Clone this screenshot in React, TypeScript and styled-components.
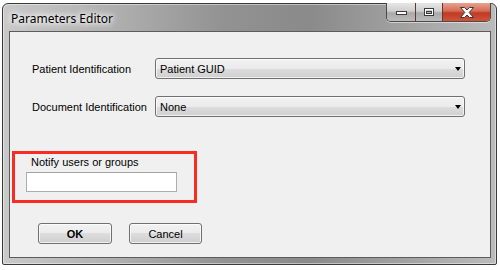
import styled, { createGlobalStyle } from 'styled-components';

const GlobalStyle = createGlobalStyle`
  html, body {
    margin: 0;
    padding: 0;
    background: #ffffff;
  }
  body {
    font-family: "Liberation Sans", Arial, sans-serif;
  }
`;

const Window = styled.div`
  box-sizing: border-box;
  margin: 3px 0 0 2px;
  width: 495px;
  height: 262px;
  border: 1px solid #3a3a3a;
  border-radius: 6px 6px 2px 2px;
  background: linear-gradient(
    90deg,
    #c9c9c9 0%,
    #b0b0b0 22%,
    #929292 45%,
    #8a8a8a 62%,
    #a0a0a0 80%,
    #bbbbbb 100%
  );
  box-shadow: inset 0 0 0 1px rgba(255, 255, 255, 0.45);
  display: flex;
  flex-direction: column;
  padding: 0 5px 6px 6px;
`;

const TitleBar = styled.div`
  height: 27px;
  display: flex;
  align-items: flex-start;
  justify-content: space-between;
`;

const Title = styled.div`
  font-family: "Noto Sans", "Open Sans", sans-serif;
  font-size: 12px;
  color: #000;
  margin: 6px 0 0 2px;
  text-shadow: 0 0 8px #ffffff, 0 0 8px #ffffff, 0 0 4px #ffffff;
`;

const Controls = styled.div`
  display: flex;
  margin-top: -1px;
  border: 1px solid #4a4a4a;
  border-top: none;
  border-radius: 0 0 5px 5px;
  overflow: hidden;
  box-shadow: 0 1px 0 rgba(255, 255, 255, 0.5);
`;

const CaptionButton = styled.div<{ $w: number; $close?: boolean }>`
  width: ${(p) => p.$w}px;
  height: 18px;
  display: flex;
  align-items: center;
  justify-content: center;
  background: ${(p) =>
    p.$close
      ? 'linear-gradient(180deg, #e7a391 0%, #d46a52 45%, #bf3a24 55%, #cf5338 100%)'
      : 'linear-gradient(180deg, #e6e6e6 0%, #cfcfcf 45%, #a9a9a9 55%, #bcbcbc 100%)'};
  & + & {
    border-left: 1px solid ${(p) => (p.$close ? '#5e3a32' : '#6a6a6a')};
  }
`;

const Client = styled.div`
  flex: 1;
  border: 1px solid #5c5c5c;
  background: #f0f0f0;
  padding: 26px 0 0 0;
  display: flex;
  flex-direction: column;
`;

const Form = styled.div`
  display: grid;
  grid-template-columns: 123px 310px;
  row-gap: 17px;
  margin-left: 22px;
  align-items: center;
`;

const Label = styled.span`
  font-size: 11px;
  color: #000;
`;

const Combo = styled.div`
  box-sizing: border-box;
  height: 21px;
  border: 1px solid #707070;
  border-radius: 3px;
  background: linear-gradient(180deg, #f2f2f2 0%, #ebebeb 50%, #dddddd 50%, #cfcfcf 100%);
  box-shadow: inset 0 0 0 1px rgba(255, 255, 255, 0.7);
  display: flex;
  align-items: center;
  justify-content: space-between;
  padding: 0 3px 0 4px;
  font-size: 11px;
  color: #000;
`;

const Arrow = styled.span`
  width: 0;
  height: 0;
  border-left: 3.5px solid transparent;
  border-right: 3.5px solid transparent;
  border-top: 4px solid #000;
`;

const NotifyBox = styled.div`
  box-sizing: border-box;
  margin: 34px 0 0 2px;
  width: 185px;
  height: 52px;
  border: 3px solid #fa2b25;
  display: flex;
  flex-direction: column;
`;

const NotifyLabel = styled.span`
  font-size: 11px;
  color: #000;
  margin: 2px 0 0 16px;
`;

const TextBox = styled.div`
  box-sizing: border-box;
  margin: 4px 0 0 11px;
  width: 151px;
  height: 20px;
  background: #ffffff;
  border: 1px solid #abadb3;
  border-top-color: #a3a3a3;
`;

const ButtonRow = styled.div`
  display: flex;
  gap: 17px;
  margin: 20px 0 0 28px;
`;

const Button = styled.div<{ $w: number; $bold?: boolean }>`
  box-sizing: border-box;
  width: ${(p) => p.$w}px;
  height: 21px;
  border: 1px solid #707070;
  border-radius: 3px;
  background: linear-gradient(180deg, #f2f2f2 0%, #ebebeb 50%, #dddddd 50%, #cfcfcf 100%);
  box-shadow: inset 0 0 0 1px rgba(255, 255, 255, 0.7);
  display: flex;
  align-items: center;
  justify-content: center;
  font-size: 11px;
  font-weight: ${(p) => (p.$bold ? 700 : 400)};
  color: #000;
`;

function MinIcon() {
  return (
    <svg width="13" height="8" viewBox="0 0 13 8">
      <rect x="1.5" y="3.5" width="10" height="3" fill="#fff" stroke="#3c3c3c" />
    </svg>
  );
}

function MaxIcon() {
  return (
    <svg width="12" height="10" viewBox="0 0 12 10">
      <rect x="1.5" y="1.5" width="9" height="7" fill="none" stroke="#3c3c3c" />
      <rect x="2.5" y="2.5" width="7" height="5" fill="none" stroke="#fff" />
      <rect x="3.5" y="4.5" width="5" height="2" fill="none" stroke="#3c3c3c" />
    </svg>
  );
}

function CloseIcon() {
  return (
    <svg width="14" height="11" viewBox="0 0 14 11">
      <path
        d="M0.5 0.5 H4.5 L7 3 L9.5 0.5 H13.5 L9.2 5.5 L13.5 10.5 H9.5 L7 8 L4.5 10.5 H0.5 L4.8 5.5 Z"
        fill="#fff"
        stroke="#3a3a3a"
        strokeWidth="1"
        strokeLinejoin="round"
      />
    </svg>
  );
}

export default function App() {
  return (
    <>
      <GlobalStyle />
      <Window>
        <TitleBar>
          <Title>Parameters Editor</Title>
          <Controls>
            <CaptionButton $w={28}>
              <MinIcon />
            </CaptionButton>
            <CaptionButton $w={26}>
              <MaxIcon />
            </CaptionButton>
            <CaptionButton $w={47} $close>
              <CloseIcon />
            </CaptionButton>
          </Controls>
        </TitleBar>
        <Client>
          <Form>
            <Label>Patient Identification</Label>
            <Combo>
              Patient GUID
              <Arrow />
            </Combo>
            <Label>Document Identification</Label>
            <Combo>
              None
              <Arrow />
            </Combo>
          </Form>
          <NotifyBox>
            <NotifyLabel>Notify users or groups</NotifyLabel>
            <TextBox />
          </NotifyBox>
          <ButtonRow>
            <Button $w={74} $bold>
              OK
            </Button>
            <Button $w={73}>Cancel</Button>
          </ButtonRow>
        </Client>
      </Window>
    </>
  );
}
